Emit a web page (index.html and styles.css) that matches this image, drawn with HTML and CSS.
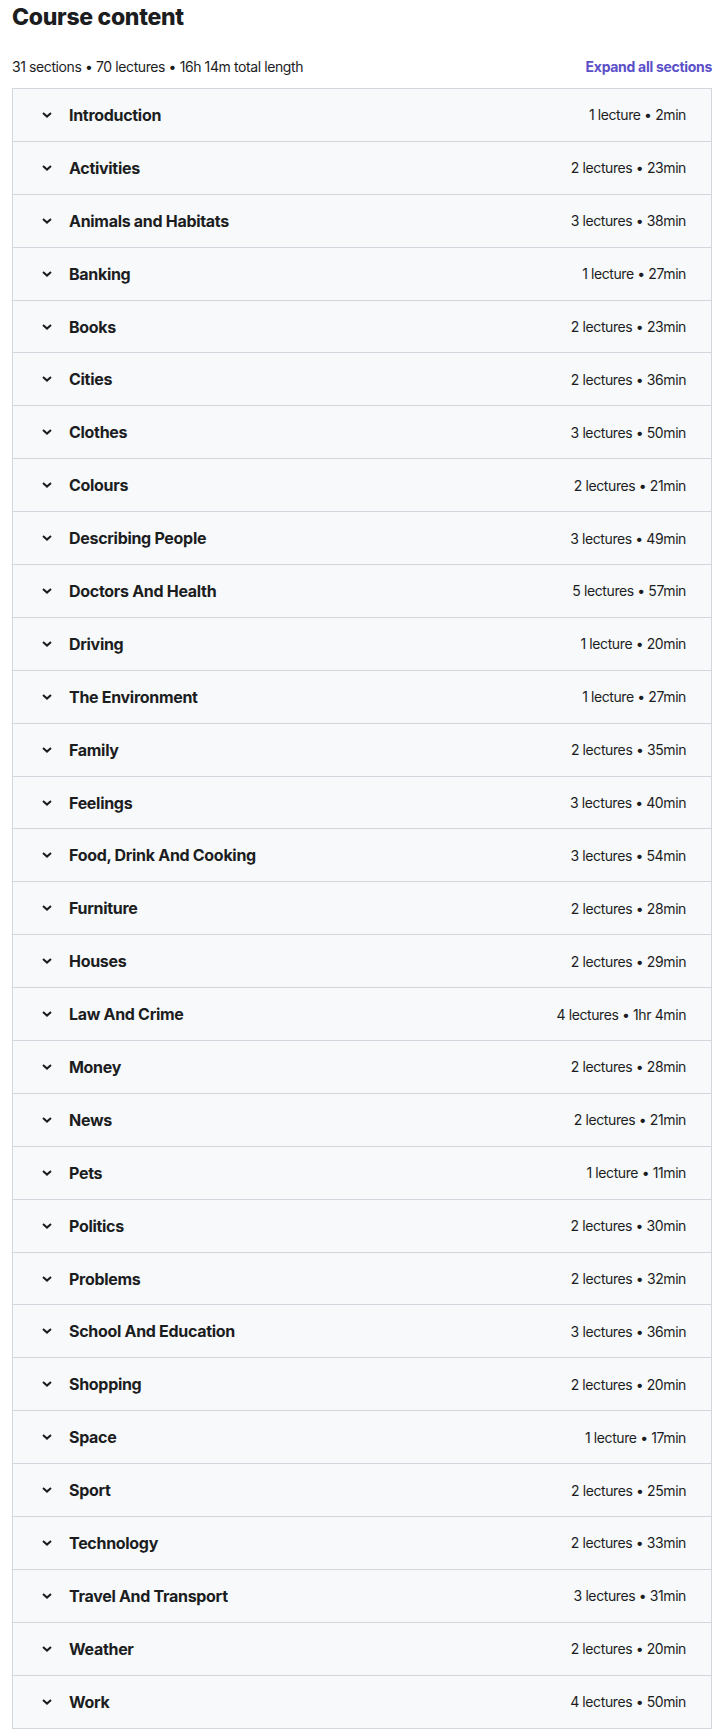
FILE: index.html
```html
<!DOCTYPE html>
<html lang="en">
<head>
  <meta charset="UTF-8">
  <meta name="viewport" content="width=device-width, initial-scale=1.0">
  <title>Course content</title>
  <link rel="stylesheet" href="styles.css">
</head>
<body>
  <div class="curriculum">
    <h2 class="section-title">Course content</h2>
    <div class="summary">
      <span class="summary-text">31 sections • 70 lectures • 16h 14m total length</span>
      <button class="expand-all">Expand all sections</button>
    </div>

    <div class="sections">
      <div class="section"><div class="section-header"><svg class="chevron" viewBox="0 0 10 6"><path d="M1 1l4 3.6L9 1"/></svg><span class="section-name">Introduction</span><span class="section-meta">1 lecture • 2min</span></div></div>
      <div class="section"><div class="section-header"><svg class="chevron" viewBox="0 0 10 6"><path d="M1 1l4 3.6L9 1"/></svg><span class="section-name">Activities</span><span class="section-meta">2 lectures • 23min</span></div></div>
      <div class="section"><div class="section-header"><svg class="chevron" viewBox="0 0 10 6"><path d="M1 1l4 3.6L9 1"/></svg><span class="section-name">Animals and Habitats</span><span class="section-meta">3 lectures • 38min</span></div></div>
      <div class="section"><div class="section-header"><svg class="chevron" viewBox="0 0 10 6"><path d="M1 1l4 3.6L9 1"/></svg><span class="section-name">Banking</span><span class="section-meta">1 lecture • 27min</span></div></div>
      <div class="section"><div class="section-header"><svg class="chevron" viewBox="0 0 10 6"><path d="M1 1l4 3.6L9 1"/></svg><span class="section-name">Books</span><span class="section-meta">2 lectures • 23min</span></div></div>
      <div class="section"><div class="section-header"><svg class="chevron" viewBox="0 0 10 6"><path d="M1 1l4 3.6L9 1"/></svg><span class="section-name">Cities</span><span class="section-meta">2 lectures • 36min</span></div></div>
      <div class="section"><div class="section-header"><svg class="chevron" viewBox="0 0 10 6"><path d="M1 1l4 3.6L9 1"/></svg><span class="section-name">Clothes</span><span class="section-meta">3 lectures • 50min</span></div></div>
      <div class="section"><div class="section-header"><svg class="chevron" viewBox="0 0 10 6"><path d="M1 1l4 3.6L9 1"/></svg><span class="section-name">Colours</span><span class="section-meta">2 lectures • 21min</span></div></div>
      <div class="section"><div class="section-header"><svg class="chevron" viewBox="0 0 10 6"><path d="M1 1l4 3.6L9 1"/></svg><span class="section-name">Describing People</span><span class="section-meta">3 lectures • 49min</span></div></div>
      <div class="section"><div class="section-header"><svg class="chevron" viewBox="0 0 10 6"><path d="M1 1l4 3.6L9 1"/></svg><span class="section-name">Doctors And Health</span><span class="section-meta">5 lectures • 57min</span></div></div>
      <div class="section"><div class="section-header"><svg class="chevron" viewBox="0 0 10 6"><path d="M1 1l4 3.6L9 1"/></svg><span class="section-name">Driving</span><span class="section-meta">1 lecture • 20min</span></div></div>
      <div class="section"><div class="section-header"><svg class="chevron" viewBox="0 0 10 6"><path d="M1 1l4 3.6L9 1"/></svg><span class="section-name">The Environment</span><span class="section-meta">1 lecture • 27min</span></div></div>
      <div class="section"><div class="section-header"><svg class="chevron" viewBox="0 0 10 6"><path d="M1 1l4 3.6L9 1"/></svg><span class="section-name">Family</span><span class="section-meta">2 lectures • 35min</span></div></div>
      <div class="section"><div class="section-header"><svg class="chevron" viewBox="0 0 10 6"><path d="M1 1l4 3.6L9 1"/></svg><span class="section-name">Feelings</span><span class="section-meta">3 lectures • 40min</span></div></div>
      <div class="section"><div class="section-header"><svg class="chevron" viewBox="0 0 10 6"><path d="M1 1l4 3.6L9 1"/></svg><span class="section-name">Food, Drink And Cooking</span><span class="section-meta">3 lectures • 54min</span></div></div>
      <div class="section"><div class="section-header"><svg class="chevron" viewBox="0 0 10 6"><path d="M1 1l4 3.6L9 1"/></svg><span class="section-name">Furniture</span><span class="section-meta">2 lectures • 28min</span></div></div>
      <div class="section"><div class="section-header"><svg class="chevron" viewBox="0 0 10 6"><path d="M1 1l4 3.6L9 1"/></svg><span class="section-name">Houses</span><span class="section-meta">2 lectures • 29min</span></div></div>
      <div class="section"><div class="section-header"><svg class="chevron" viewBox="0 0 10 6"><path d="M1 1l4 3.6L9 1"/></svg><span class="section-name">Law And Crime</span><span class="section-meta">4 lectures • 1hr 4min</span></div></div>
      <div class="section"><div class="section-header"><svg class="chevron" viewBox="0 0 10 6"><path d="M1 1l4 3.6L9 1"/></svg><span class="section-name">Money</span><span class="section-meta">2 lectures • 28min</span></div></div>
      <div class="section"><div class="section-header"><svg class="chevron" viewBox="0 0 10 6"><path d="M1 1l4 3.6L9 1"/></svg><span class="section-name">News</span><span class="section-meta">2 lectures • 21min</span></div></div>
      <div class="section"><div class="section-header"><svg class="chevron" viewBox="0 0 10 6"><path d="M1 1l4 3.6L9 1"/></svg><span class="section-name">Pets</span><span class="section-meta">1 lecture • 11min</span></div></div>
      <div class="section"><div class="section-header"><svg class="chevron" viewBox="0 0 10 6"><path d="M1 1l4 3.6L9 1"/></svg><span class="section-name">Politics</span><span class="section-meta">2 lectures • 30min</span></div></div>
      <div class="section"><div class="section-header"><svg class="chevron" viewBox="0 0 10 6"><path d="M1 1l4 3.6L9 1"/></svg><span class="section-name">Problems</span><span class="section-meta">2 lectures • 32min</span></div></div>
      <div class="section"><div class="section-header"><svg class="chevron" viewBox="0 0 10 6"><path d="M1 1l4 3.6L9 1"/></svg><span class="section-name">School And Education</span><span class="section-meta">3 lectures • 36min</span></div></div>
      <div class="section"><div class="section-header"><svg class="chevron" viewBox="0 0 10 6"><path d="M1 1l4 3.6L9 1"/></svg><span class="section-name">Shopping</span><span class="section-meta">2 lectures • 20min</span></div></div>
      <div class="section"><div class="section-header"><svg class="chevron" viewBox="0 0 10 6"><path d="M1 1l4 3.6L9 1"/></svg><span class="section-name">Space</span><span class="section-meta">1 lecture • 17min</span></div></div>
      <div class="section"><div class="section-header"><svg class="chevron" viewBox="0 0 10 6"><path d="M1 1l4 3.6L9 1"/></svg><span class="section-name">Sport</span><span class="section-meta">2 lectures • 25min</span></div></div>
      <div class="section"><div class="section-header"><svg class="chevron" viewBox="0 0 10 6"><path d="M1 1l4 3.6L9 1"/></svg><span class="section-name">Technology</span><span class="section-meta">2 lectures • 33min</span></div></div>
      <div class="section"><div class="section-header"><svg class="chevron" viewBox="0 0 10 6"><path d="M1 1l4 3.6L9 1"/></svg><span class="section-name">Travel And Transport</span><span class="section-meta">3 lectures • 31min</span></div></div>
      <div class="section"><div class="section-header"><svg class="chevron" viewBox="0 0 10 6"><path d="M1 1l4 3.6L9 1"/></svg><span class="section-name">Weather</span><span class="section-meta">2 lectures • 20min</span></div></div>
      <div class="section"><div class="section-header"><svg class="chevron" viewBox="0 0 10 6"><path d="M1 1l4 3.6L9 1"/></svg><span class="section-name">Work</span><span class="section-meta">4 lectures • 50min</span></div></div>
    </div>
  </div>
</body>
</html>
```

FILE: styles.css
```css
body { margin: 0; padding: 0 5px 0 12px; font-family: Inter, "Noto Sans", sans-serif; color: #1c1d1f; background: #fff; }
.curriculum { max-width: 700px; }
.section-title { margin: 0 0 23px; font-size: 23px; line-height: 34px; font-weight: 800; letter-spacing: -0.3px; }
.summary { display: flex; justify-content: space-between; align-items: center; margin-bottom: 11px; }
.summary-text { font-size: 14px; line-height: 20px; letter-spacing: -0.4px; }
.expand-all { padding: 0; border: none; background: none; font-family: inherit; font-size: 14px; line-height: 20px; font-weight: 700; letter-spacing: -0.3px; color: #5a50c8; cursor: pointer; }
.sections { border: 1px solid #d1d7dc; border-bottom: none; }
.section { border-bottom: 1px solid #d1d7dc; background: #f7f9fa; }
.section-header { display: flex; align-items: center; height: 51.9px; padding: 0 25px 0 29px; }
.chevron { width: 10px; height: 6px; margin-right: 17px; fill: none; stroke: #1c1d1f; stroke-width: 2; }
.section-name { flex: 1; font-size: 16px; font-weight: 700; letter-spacing: -0.3px; }
.section-meta { font-size: 14px; letter-spacing: -0.4px; }
```
